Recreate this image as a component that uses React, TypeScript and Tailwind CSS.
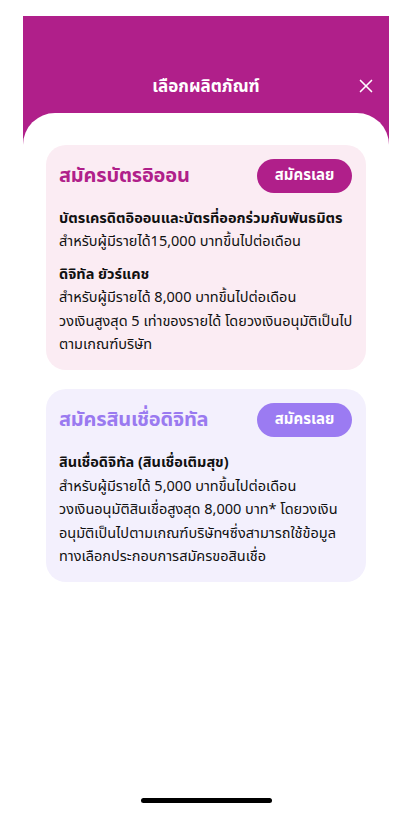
import { X } from 'lucide-react'

type Product = {
  title: string
  titleColor: string
  cardBg: string
  buttonBg: string
  sections: { heading: string; lines: string[] }[]
}

const products: Product[] = [
  {
    title: 'สมัครบัตรอิออน',
    titleColor: 'text-[#b01f8a]',
    cardBg: 'bg-[#fbecf3]',
    buttonBg: 'bg-[#b01f8a]',
    sections: [
      {
        heading: 'บัตรเครดิตอิออนและบัตรที่ออกร่วมกับพันธมิตร',
        lines: ['สำหรับผู้มีรายได้15,000 บาทขึ้นไปต่อเดือน'],
      },
      {
        heading: 'ดิจิทัล ยัวร์แคช',
        lines: [
          'สำหรับผู้มีรายได้ 8,000 บาทขึ้นไปต่อเดือน',
          'วงเงินสูงสุด 5 เท่าของรายได้ โดยวงเงินอนุมัติเป็นไป',
          'ตามเกณฑ์บริษัท',
        ],
      },
    ],
  },
  {
    title: 'สมัครสินเชื่อดิจิทัล',
    titleColor: 'text-[#9a7af0]',
    cardBg: 'bg-[#f3f0fd]',
    buttonBg: 'bg-[#9b7bf2]',
    sections: [
      {
        heading: 'สินเชื่อดิจิทัล (สินเชื่อเติมสุข)',
        lines: [
          'สำหรับผู้มีรายได้ 5,000 บาทขึ้นไปต่อเดือน',
          'วงเงินอนุมัติสินเชื่อสูงสุด 8,000 บาท* โดยวงเงิน',
          'อนุมัติเป็นไปตามเกณฑ์บริษัทฯซึ่งสามารถใช้ข้อมูล',
          'ทางเลือกประกอบการสมัครขอสินเชื่อ',
        ],
      },
    ],
  },
]

export default function App() {
  return (
    <div className="flex h-[825px] w-[412px] flex-col overflow-hidden bg-white px-[23px] pt-4 font-['Noto_Sans_Thai','Noto_Sans',sans-serif] text-[#111]">
      <div className="flex flex-1 flex-col bg-[#b01f8a]">
        <header className="relative flex h-[97px] items-end justify-center pb-[14px]">
          <h1 className="text-[17px] font-bold leading-6 text-white">เลือกผลิตภัณฑ์</h1>
          <button type="button" className="absolute right-[12px] bottom-[16px] text-white">
            <X className="h-[22px] w-[22px]" strokeWidth={1.8} />
          </button>
        </header>

        <div className="flex flex-1 flex-col gap-[19px] rounded-t-[32px] bg-white px-[23px] pt-[32px]">
          {products.map((p) => (
            <ProductCard key={p.title} product={p} />
          ))}
          <div className="mt-auto flex justify-center pb-[22px]">
            <div className="h-[5px] w-[131px] rounded-full bg-black" />
          </div>
        </div>
      </div>
    </div>
  )
}

function ProductCard({ product }: { product: Product }) {
  return (
    <div className={['rounded-[20px] pt-[14px] pr-[14px] pb-[13px] pl-[13px]', product.cardBg].join(' ')}>
      <div className="flex h-[34px] items-center justify-between">
        <h2 className={['text-[20px] font-bold tracking-[-0.2px]', product.titleColor].join(' ')}>{product.title}</h2>
        <button
          type="button"
          className={['h-[34px] w-[95px] rounded-full text-[15px] font-bold text-white', product.buttonBg].join(' ')}
        >
          สมัครเลย
        </button>
      </div>

      <div className="mt-[15px] space-y-[9px] text-[14.5px] leading-[23.4px] whitespace-nowrap">
        {product.sections.map((s) => (
          <div key={s.heading}>
            <p className="font-bold">{s.heading}</p>
            {s.lines.map((l) => (
              <p key={l}>{l}</p>
            ))}
          </div>
        ))}
      </div>
    </div>
  )
}
